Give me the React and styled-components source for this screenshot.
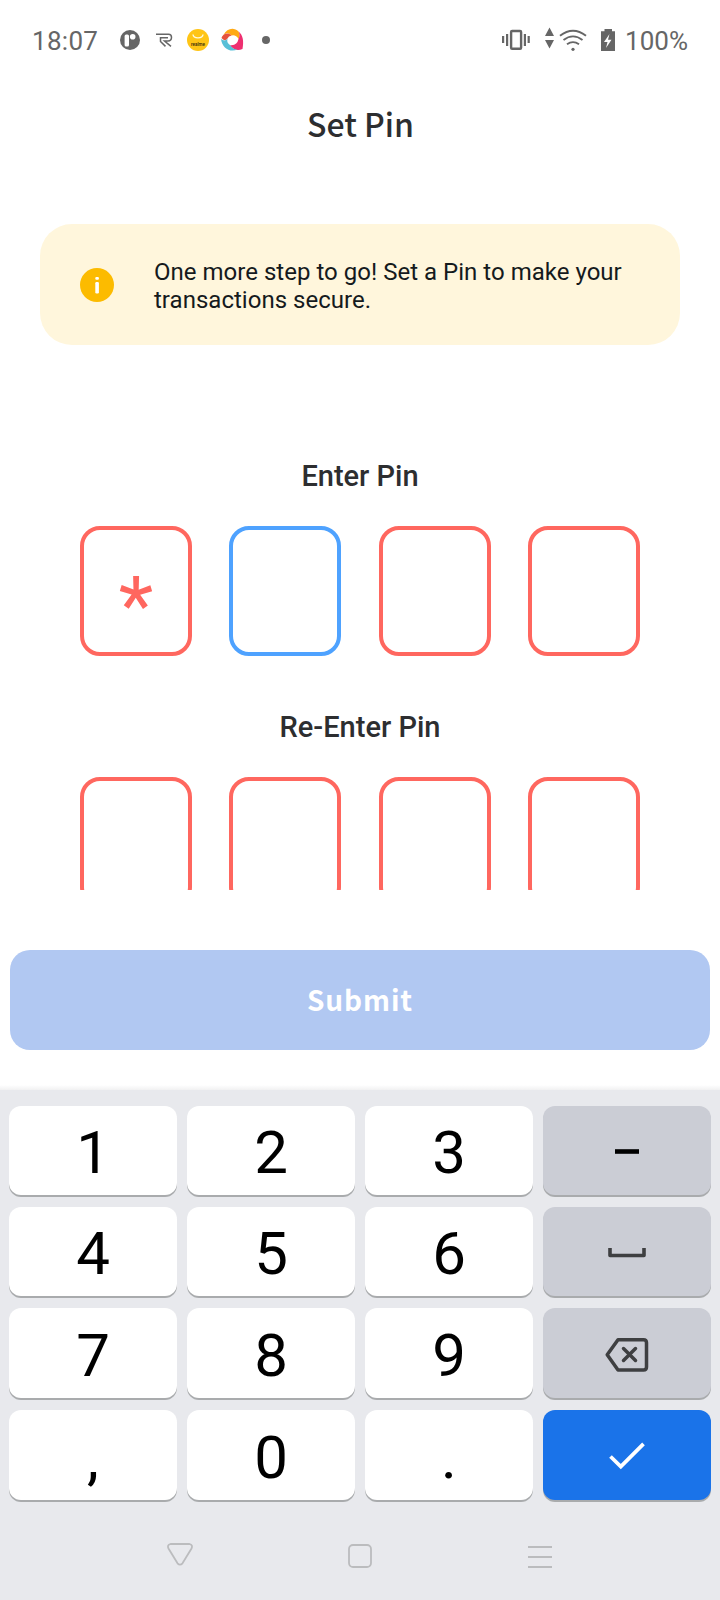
import React from "react";
import styled, { createGlobalStyle } from "styled-components";

const GlobalStyle = createGlobalStyle`
  * { box-sizing: border-box; }
  body { margin: 0; background: #fff; font-family: Roboto, "Liberation Sans", sans-serif; }
  svg { display: block; flex: none; }
`;

const Screen = styled.div`
  width: 720px;
  height: 1600px;
  display: flex;
  flex-direction: column;
  overflow: hidden;
  background: #fff;
`;

const StatusBar = styled.header`
  height: 80px;
  padding: 0 32px;
  display: flex;
  align-items: center;
  justify-content: space-between;
  color: #666;
`;

const StatusGroup = styled.div`
  display: flex;
  align-items: center;
  gap: ${(p) => p.$gap}px;
`;

const StatusText = styled.span`
  min-width: ${(p) => p.$width || 0}px;
  white-space: nowrap;
  font-size: 26px;
  line-height: 30px;
  padding-top: 2px;
  letter-spacing: ${(p) => p.$spacing || "0"};
`;

const Title = styled.h1`
  margin: 0;
  height: 144px;
  padding: 18px 0 0 1px;
  text-align: center;
  font: 500 32px/50px "Noto Sans CJK SC", sans-serif;
  color: #2d2e30;
`;

const Notice = styled.section`
  flex: none;
  height: 120.5px;
  margin: 0 40px;
  padding: 2px 40px 0;
  display: flex;
  align-items: center;
  gap: 40px;
  border-radius: 32px;
  background: #fff6dc;
`;

const NoticeText = styled.p`
  margin: 0;
  padding-top: 2px;
  font-size: 24px;
  line-height: 28px;
  letter-spacing: 0.02px;
  white-space: nowrap;
  color: #151a1d;
`;

const PinArea = styled.main`
  flex: none;
  height: 545.5px;
  padding: 114px 80px 0;
  overflow: hidden;
`;

const PinGroup = styled.section`
  height: 251px;
`;

const PinLabel = styled.h2`
  margin: 0;
  height: 67px;
  text-align: center;
  font-size: 29px;
  font-weight: 500;
  line-height: 34px;
  color: #2d2e30;
`;

const PinRow = styled.div`
  display: flex;
  justify-content: space-between;
`;

const PinBox = styled.div`
  width: 112px;
  height: 130px;
  display: flex;
  justify-content: center;
  border: 4px solid ${(p) => (p.$active ? "#4ea2ff" : "#ff675f")};
  border-radius: 20px;
  font-size: 80px;
  font-weight: 400;
  line-height: 153px;
  color: #ff675f;
`;

const SubmitBar = styled.div`
  flex: none;
  height: 200px;
  padding: 60px 10px 0;
  background: linear-gradient(#fff 195px, #f1f1f2);
`;

const SubmitButton = styled.button`
  width: 100%;
  height: 100px;
  border: 0;
  border-radius: 20px;
  padding: 0 0 3px;
  background: #b1c8f2;
  color: #fff;
  font: 700 28px/44px "Noto Sans CJK SC", sans-serif;
  letter-spacing: 0.9px;
`;

const Keyboard = styled.section`
  flex: 1;
  padding: 16px 9px 0;
  background: #e8e9ed;
`;

const KeyGrid = styled.div`
  display: grid;
  grid-template-columns: repeat(4, 168px);
  grid-template-rows: 89px 89px 90px 90px;
  gap: 12px 10px;
`;

const keyColors = { digit: "#fff", side: "#cbcdd5", enter: "#1a73e9" };
const keyInsets = { digit: 5, side: 3, enter: 1 };

const Key = styled.button`
  display: flex;
  align-items: center;
  justify-content: center;
  border: 0;
  padding: ${(p) => keyInsets[p.$kind]}px 0 0;
  border-radius: 12px;
  background: ${(p) => keyColors[p.$kind]};
  box-shadow: 0 2px 0 #a9abad;
  color: #000;
  font-family: Roboto, sans-serif;
  font-size: 60px;
  line-height: 70px;
`;

const NavBar = styled.nav`
  height: 100px;
  display: flex;
  align-items: center;
  justify-content: space-between;
  padding: 12px 148px 0;
`;

const StatusIcons = () => (
  <svg width="160" height="30" viewBox="115 25 160 30">
    <circle cx="130" cy="40" r="10" fill="#666" />
    <rect x="124.6" y="34.5" width="4.4" height="12" rx="1.5" fill="#fff" />
    <circle cx="132.7" cy="36.8" r="2.8" fill="#fff" />
    <path d="M156 34.2H168.500Q171.500 34.200 171.500 37.300Q171.500 41 168 41H164.500L171 46.400M168 37.700H160.500V41.500L165.500 46.400" fill="none" stroke="#666" strokeWidth="1.500" />
    <circle cx="198" cy="40" r="11" fill="#ffc516" />
    <path d="M193 34.5C193.5 39 202.5 39 203 34.5" fill="none" stroke="#fffbe0" strokeWidth="1.4" />
    <text x="198" y="46.2" textAnchor="middle" fontSize="5.500" fontWeight="500" textLength="14" lengthAdjust="spacingAndGlyphs" fill="#33290c">realme</text>
    <path d="M223.5 35C227 28 234 27 238.5 31.5Q240.500 35 238.500 39Q236 34.500 231.500 35.500Q227.500 31.500 223.500 35Z" fill="#ffa914" />
    <path d="M238.500 31.5C243 35 244 41 242.5 49C237 51.5 232 49 230 45Q237 46 238.5 39Q240.500 35 238.500 31.5Z" fill="#ee2f70" />
    <path d="M221 39Q225 42 227.500 38.500Q226.500 43 230 45Q233 49.500 237.5 49.5C230 53 222 48 221 39Z" fill="#57bfd7" />
    <path d="M221.5 38C222.5 34.500 227.500 31.500 231.500 35.500Q228.500 36 227.500 38.500Q224.5 42 221.5 38Z" fill="#e6523d" />
    <circle cx="266" cy="40" r="4" fill="#666" />
  </svg>
);

const SystemIcons = () => (
  <svg width="116" height="30" viewBox="500 25 116 30">
    <g fill="#666">
      <path d="M502 36h2.2v7H502zM506 34h2.2v12H506zM523.8 34h2.2v12h-2.2zM527.6 36h2.2v7h-2.2z" />
      <path d="M549.5 27.5L554 36h-9zM545 40h9l-4.5 8.5z" />
      <circle cx="573" cy="49.3" r="1.6" />
      <path d="M604.5 29h7.5v2.2h3V51H601V31.200h3.500z" />
    </g>
    <rect x="511.100" y="31" width="10" height="17.800" rx="1" fill="none" stroke="#666" strokeWidth="2.400" />
    <path d="M560 35.800Q573 25.500 586 35.800M563.500 40Q573 32.800 582.500 40M567 44.300Q573 40 579 44.300" fill="none" stroke="#666" strokeWidth="1.900" />
    <path d="M609.500 34L604 42h3.500l-1.500 6 5.500-8.200h-3.500z" fill="#fff" />
  </svg>
);

const InfoIcon = () => (
  <svg width="34" height="34" viewBox="0 0 34 34">
    <circle cx="17" cy="17" r="17" fill="#fcbb00" />
    <rect x="15.300" y="9" width="3.600" height="2.800" rx="1" fill="#fff" />
    <rect x="15.300" y="14" width="3.600" height="11.500" rx="1.200" fill="#fff" />
  </svg>
);

const SpaceIcon = () => (
  <svg width="40" height="12" viewBox="0 0 40 12">
    <path d="M3 1V8.500H37V1" fill="none" stroke="#3e3f41" strokeWidth="3.600" strokeLinejoin="round" />
  </svg>
);

const BackspaceIcon = () => (
  <svg width="44" height="36" viewBox="0 0 44 36">
    <path d="M13 2.700H38.500Q41.500 2.700 41.500 5.700V30Q41.500 33 38.500 33H13L2.200 17.850Z" fill="none" stroke="#3e3f41" strokeWidth="3.500" strokeLinejoin="round" />
    <path d="M18.500 11.500L30.500 23.500M30.500 11.500L18.500 23.500" stroke="#3e3f41" strokeWidth="3.500" strokeLinecap="round" />
  </svg>
);

const CheckIcon = () => (
  <svg width="36" height="28" viewBox="0 0 36 28">
    <path d="M1.500 14.500L11.800 24.500L34.500 1.800" fill="none" stroke="#fff" strokeWidth="3.800" />
  </svg>
);

const BackIcon = () => (
  <svg width="46" height="26" viewBox="157 1543 46 26">
    <path d="M170.500 1544H189.500Q193.200 1545 191.500 1548.500L182.500 1563.300Q180 1566 177.500 1563.300L168.500 1548.500Q166.800 1545 170.500 1544Z" fill="none" stroke="#bbbcbe" strokeWidth="1.800" />
  </svg>
);

const HomeIcon = () => (
  <svg width="26" height="26" viewBox="0 0 26 26">
    <rect x="2" y="2" width="22" height="22" rx="4" fill="none" stroke="#bbbcbe" strokeWidth="1.800" />
  </svg>
);

const MenuIcon = () => (
  <svg width="46" height="26" viewBox="0 0 46 26">
    <path d="M11 4H35M11 14H35M11 24H35" stroke="#bbbcbe" strokeWidth="1.800" />
  </svg>
);

const DashIcon = () => (
  <svg width="26" height="6" viewBox="0 0 26 6">
    <path d="M1 2.500H25" stroke="#000" strokeWidth="4.600" />
  </svg>
);

const keys = [
  ["1"], ["2"], ["3"], [<DashIcon key="d" />, "side"],
  ["4"], ["5"], ["6"], [<SpaceIcon key="s" />, "side"],
  ["7"], ["8"], ["9"], [<BackspaceIcon key="b" />, "side"],
  [","], ["0"], ["."], [<CheckIcon key="c" />, "enter"],
];

function PinEntry({ label, value = "", active = -1 }) {
  return (
    <PinGroup>
      <PinLabel>{label}</PinLabel>
      <PinRow>
        {[0, 1, 2, 3].map((i) => (
          <PinBox key={i} $active={i === active}>{value[i] ? "*" : ""}</PinBox>
        ))}
      </PinRow>
    </PinGroup>
  );
}

export default function App() {
  return (
    <Screen>
      <GlobalStyle />
      <StatusBar>
        <StatusGroup $gap={17}>
          <StatusText $spacing="0.3px" $width={66}>18:07</StatusText>
          <StatusIcons />
        </StatusGroup>
        <StatusGroup $gap={9}>
          <SystemIcons />
          <StatusText>100%</StatusText>
        </StatusGroup>
      </StatusBar>
      <Title>Set Pin</Title>
      <Notice>
        <InfoIcon />
        <NoticeText>
          One more step to go! Set a Pin to make your
          <br />
          transactions secure.
        </NoticeText>
      </Notice>
      <PinArea>
        <PinEntry label="Enter Pin" value="1" active={1} />
        <PinEntry label="Re-Enter Pin" />
      </PinArea>
      <SubmitBar>
        <SubmitButton>Submit</SubmitButton>
      </SubmitBar>
      <Keyboard>
        <KeyGrid>
          {keys.map(([face, kind = "digit"], i) => (
            <Key key={i} $kind={kind}>{face}</Key>
          ))}
        </KeyGrid>
        <NavBar>
          <BackIcon />
          <HomeIcon />
          <MenuIcon />
        </NavBar>
      </Keyboard>
    </Screen>
  );
}
